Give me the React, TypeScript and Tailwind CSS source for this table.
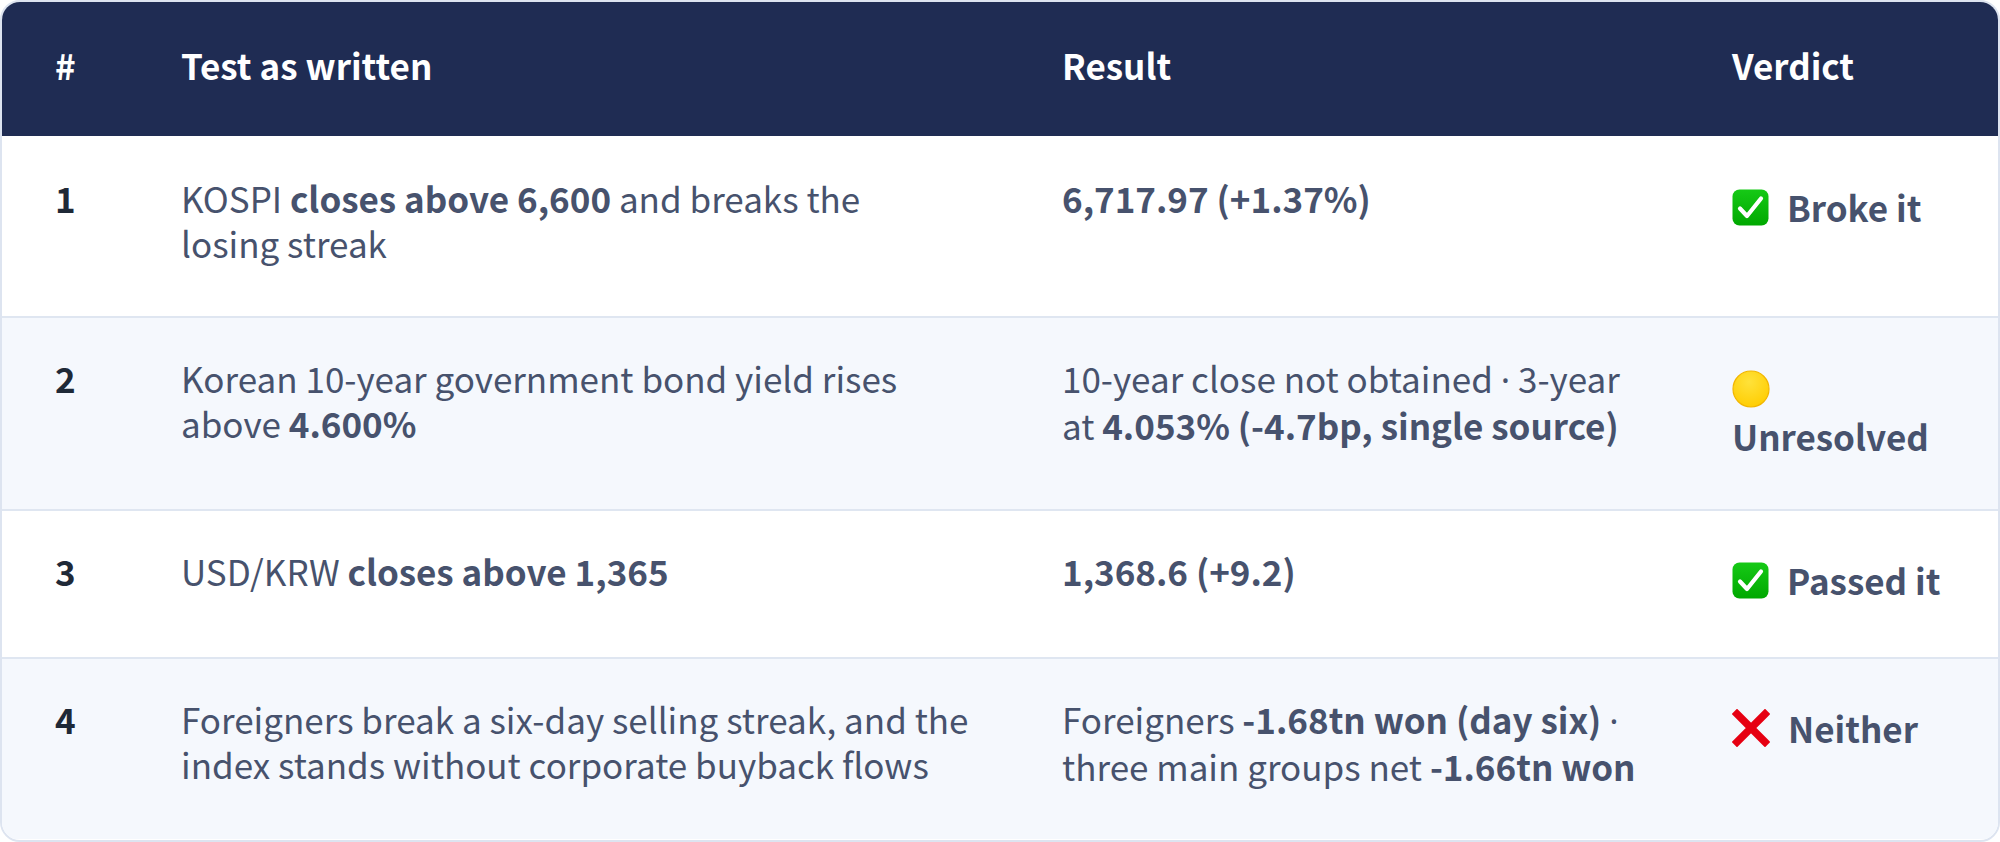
import React from "react"

const font = { fontFamily: '"Noto Sans CJK KR", "Noto Sans", sans-serif' }

function CheckIcon() {
  return (
    <svg width="37" height="37" viewBox="0 0 37 37" className="shrink-0">
      <defs>
        <linearGradient id="chk" x1="0" y1="0" x2="0" y2="1">
          <stop offset="0" stopColor="#16c916" />
          <stop offset="1" stopColor="#00a800" />
        </linearGradient>
      </defs>
      <rect x="0.5" y="0.5" width="36" height="36" rx="7" fill="url(#chk)" />
      <path d="M8 19.5 L15 27 L29 9.5" fill="none" stroke="#fff" strokeWidth="4.2" strokeLinecap="round" strokeLinejoin="round" />
    </svg>
  )
}

function YellowDot() {
  return (
    <svg width="38" height="38" viewBox="0 0 38 38" className="shrink-0">
      <defs>
        <radialGradient id="dot" cx="0.45" cy="0.3" r="0.75">
          <stop offset="0" stopColor="#ffe23a" />
          <stop offset="1" stopColor="#ffcc00" />
        </radialGradient>
      </defs>
      <circle cx="19" cy="19" r="18" fill="url(#dot)" stroke="#f2b600" strokeWidth="1.2" />
    </svg>
  )
}

function CrossIcon() {
  return (
    <svg width="38" height="38" viewBox="0 0 38 38" className="shrink-0">
      <path d="M5 5 L33 33 M33 5 L5 33" stroke="#e60012" strokeWidth="7.5" strokeLinecap="square" />
    </svg>
  )
}

type Row = {
  n: string
  test: React.ReactNode
  result: React.ReactNode
  verdict: React.ReactNode
  alt?: boolean
}

const B = ({ children }: { children: React.ReactNode }) => <span className="font-bold">{children}</span>
const Dot = () => <span className="font-['Noto_Sans']">·</span>

function Verdict({ icon, label }: { icon: React.ReactNode; label: string }) {
  return (
    <div className="flex h-[58px] items-center gap-[18px] pt-[5px]">
      <span className="mt-[1px]">{icon}</span>
      <span className="font-bold">{label}</span>
    </div>
  )
}

const rows: Row[] = [
  {
    n: "1",
    test: (
      <>
        KOSPI <B>closes above 6,600</B> and breaks the
        <br />
        losing streak
      </>
    ),
    result: <B>6,717.97 (+1.37%)</B>,
    verdict: <Verdict icon={<CheckIcon />} label="Broke it" />,
  },
  {
    n: "2",
    alt: true,
    test: (
      <>
        Korean 10-year government bond yield rises
        <br />
        above <B>4.600%</B>
      </>
    ),
    result: (
      <>
        10-year close not obtained <Dot /> 3-year
        <br />
        at <B>4.053% (-4.7bp, single source)</B>
      </>
    ),
    verdict: (
      <div>
        <div className="flex h-[58px] items-center">
          <span className="mt-[10px]">
            <YellowDot />
          </span>
        </div>
        <div className="font-bold">Unresolved</div>
      </div>
    ),
  },
  {
    n: "3",
    test: (
      <>
        USD/KRW <B>closes above 1,365</B>
      </>
    ),
    result: <B>1,368.6 (+9.2)</B>,
    verdict: <Verdict icon={<CheckIcon />} label="Passed it" />,
  },
  {
    n: "4",
    alt: true,
    test: (
      <>
        Foreigners break a six-day selling streak, and the
        <br />
        index stands without corporate buyback flows
      </>
    ),
    result: (
      <>
        Foreigners <B>-1.68tn won (day six)</B> <Dot />
        <br />
        three main groups net <B>-1.66tn won</B>
      </>
    ),
    verdict: <Verdict icon={<CrossIcon />} label="Neither" />,
  },
]

export default function App() {
  return (
    <div className="h-[842px] w-[2000px] bg-white" style={font}>
      <div className="h-[842px] overflow-hidden rounded-[20px] border-2 border-[#dde4f0] text-[35px] leading-[45px] text-[#47526d]">
        <div className="grid grid-cols-[179px_881px_670px_1fr] bg-[#1f2c53] pt-[40px] pb-[49px] font-bold text-white">
          <div className="pl-[53px]">#</div>
          <div>Test as written</div>
          <div>Result</div>
          <div>Verdict</div>
        </div>
        {rows.map((r, i) => (
          <div
            key={r.n}
            className={`grid grid-cols-[179px_881px_670px_1fr] pb-[51px] ${
              i === 0 ? "pt-[39px]" : "border-t-2 border-[#dfe6f1] pt-[37px]"
            } ${r.alt ? "bg-[#f5f8fd]" : "bg-white"}`}
          >
            <div className="pl-[53px] font-bold text-[#1f2937]">{r.n}</div>
            <div>{r.test}</div>
            <div>{r.result}</div>
            <div>{r.verdict}</div>
          </div>
        ))}
      </div>
    </div>
  )
}
